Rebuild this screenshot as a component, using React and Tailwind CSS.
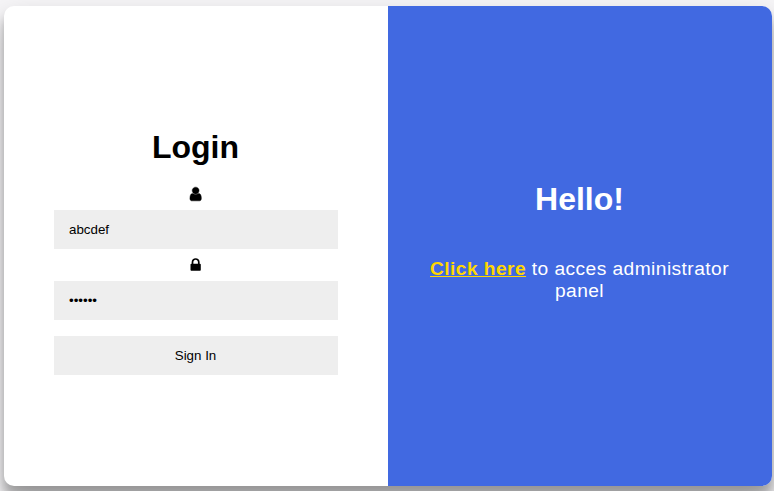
function UserIcon() {
  return (
    <svg viewBox="40 0 1792 1792" className="size-4 fill-black stroke-black" strokeWidth="50">
      <path d="M1536 1399q0 109-62.5 187t-150.5 78h-854q-88 0-150.5-78t-62.5-187q0-85 8.5-160.5t31.5-152 58.5-131 94-89 134.5-34.5q131 128 313 128t313-128q76 0 134.5 34.5t94 89 58.5 131 31.5 152 8.5 160.5zm-256-887q0 159-112.5 271.5t-271.5 112.5-271.5-112.5-112.5-271.5 112.5-271.5 271.5-112.5 271.5 112.5 112.5 271.5z" />
    </svg>
  );
}

function LockIcon() {
  return (
    <svg viewBox="40 0 1792 1792" className="size-4 fill-black">
      <path d="M640 768h512v-192q0-106-75-181t-181-75-181 75-75 181v192zm832 96v576q0 40-28 68t-68 28h-960q-40 0-68-28t-28-68v-576q0-40 28-68t68-28h32v-192q0-184 132-316t316-132 316 132 132 316v192h32q40 0 68 28t28 68z" />
    </svg>
  );
}

export default function App() {
  return (
    <div className="h-[491px] w-[774px] overflow-hidden bg-[#f6f5f7] pt-1.5 pl-1 font-['Liberation_Sans',Arial,sans-serif] text-black">
      <main className="flex h-[480px] w-[768px] overflow-hidden rounded-[10px] bg-white shadow-[0_14px_28px_rgba(0,0,0,0.25),0_10px_10px_rgba(0,0,0,0.22)]">
        <form className="flex w-1/2 flex-col items-center px-[50px] pt-[123px]">
          <h1 className="h-[37px] pr-px text-[32px] leading-[37px] font-bold">Login</h1>
          <div className="mt-5 mb-2">
            <UserIcon />
          </div>
          <input
            type="text"
            defaultValue="abcdef"
            className="h-[39px] w-full bg-[#eee] px-[15px] text-[13.333px] outline-none"
          />
          <div className="my-2">
            <LockIcon />
          </div>
          <input
            type="password"
            defaultValue="abcdef"
            className="h-[39px] w-full bg-[#eee] px-[15px] text-[13.333px] outline-none"
          />
          <button type="button" className="mt-4 h-[39px] w-full bg-[#eee] pr-px text-[13.333px]">
            Sign In
          </button>
        </form>
        <section className="flex w-1/2 flex-col items-center bg-[#4169e1] px-10 pt-[175px] text-center text-white">
          <h1 className="h-[37px] pr-px text-[32px] leading-[37px] font-bold">Hello!</h1>
          <p className="mt-10 pr-px text-[19.2px] leading-[22px] tracking-[0.43px]">
            <a href="#" className="font-bold text-[#ffd700] underline">
              Click here
            </a>{" "}
            to acces administrator panel
          </p>
        </section>
      </main>
    </div>
  );
}
